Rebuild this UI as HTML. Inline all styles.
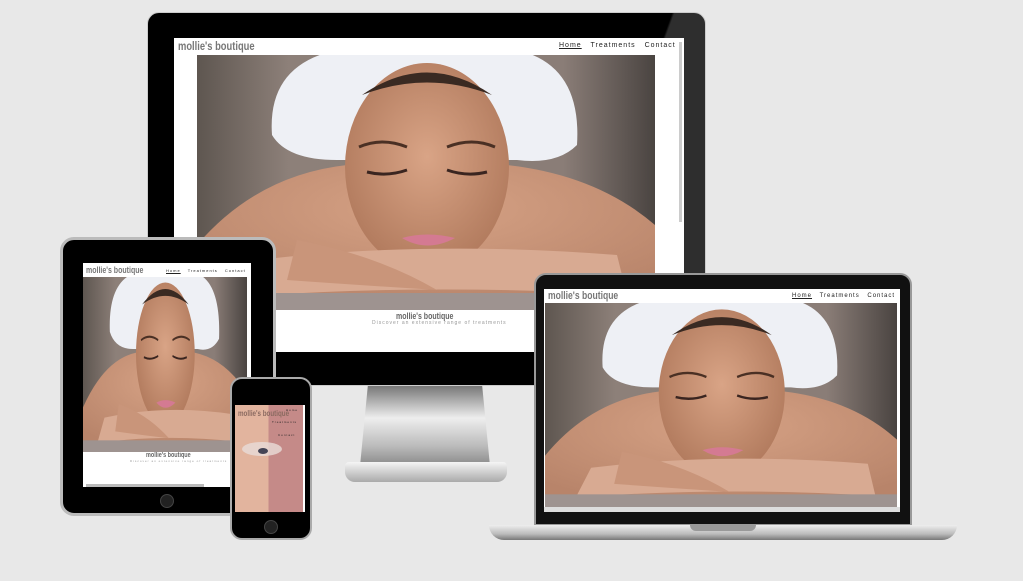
<!DOCTYPE html>
<html><head><meta charset="utf-8"><style>
*{margin:0;padding:0;box-sizing:border-box}
body{width:1023px;height:581px;background:#e8e8e8;position:relative;overflow:hidden;font-family:"Liberation Sans",sans-serif}
.a{position:absolute}
.logo{font-family:"Liberation Sans",sans-serif;font-weight:bold;color:#777;transform:scaleX(.78);transform-origin:left top;white-space:nowrap}
.nav{color:#222;letter-spacing:1px;white-space:nowrap}
</style></head><body>
<svg width="0" height="0" style="position:absolute"><defs>
<linearGradient id="bg" x1="0" x2="1"><stop offset="0" stop-color="#5e5650"/><stop offset=".2" stop-color="#8d8079"/><stop offset=".8" stop-color="#8a7d77"/><stop offset="1" stop-color="#4a4441"/></linearGradient>
<radialGradient id="sk" cx=".5" cy=".3" r=".7"><stop offset="0" stop-color="#d6a285"/><stop offset="1" stop-color="#b8846a"/></radialGradient>
<radialGradient id="fc" cx=".5" cy=".45" r=".55"><stop offset="0" stop-color="#d9a486"/><stop offset="1" stop-color="#b27b5e"/></radialGradient>
<symbol id="ph" viewBox="0 0 458 255" preserveAspectRatio="none">
<rect width="458" height="255" fill="url(#bg)"/>
<path d="M0 190 Q60 120 150 110 L310 110 Q400 120 458 170 L458 255 L0 255Z" fill="url(#sk)"/>
<path d="M75 80 Q70 10 140 -5 L320 -5 Q385 10 380 90 Q360 110 320 105 L140 105 Q90 105 75 80Z" fill="#eef0f5"/>
<ellipse cx="230" cy="112" rx="82" ry="104" fill="url(#fc)"/>
<path d="M165 40 Q230 -5 295 40 Q230 15 165 40Z" fill="#3a2a22"/>
<path d="M162 92 Q185 82 210 92 M250 92 Q275 82 298 92" stroke="#4a3024" stroke-width="3" fill="none"/>
<path d="M170 117 Q190 122 210 115 M250 115 Q270 122 290 117" stroke="#3a2520" stroke-width="3" fill="none"/>
<path d="M205 183 Q230 198 258 183 Q230 176 205 183Z" fill="#d47a92"/>
<path d="M60 205 Q230 185 420 200 L430 240 Q230 228 40 242Z" fill="#d8aa92"/>
<path d="M100 185 Q180 200 240 235 Q160 230 90 225Z" fill="#c9957a"/>
<rect x="0" y="238" width="458" height="17" fill="#9e9390"/>
</symbol>
</defs></svg>

<!-- Monitor -->
<div class="a" style="left:147px;top:12px;width:559px;height:374px;background:#000;border-radius:12px;border:1px solid #ccc"></div>
<div class="a" style="left:600px;top:13px;width:105px;height:372px;background:linear-gradient(110deg,transparent 30%,rgba(255,255,255,.18) 31%);border-radius:0 11px 11px 0"></div>
<div class="a" style="left:174px;top:38px;width:510px;height:314px;background:#fff"></div>
<div class="a logo" style="left:178px;top:39px;font-size:12px">mollie's boutique</div>
<div class="a nav" style="left:559px;top:42px;font-size:7px;word-spacing:6px"><u>Home</u> Treatments Contact</div>
<div class="a" style="left:679px;top:42px;width:3px;height:180px;background:#ccc"></div>
<svg class="a" style="left:197px;top:55px" width="458" height="255"><use href="#ph"/></svg>
<div class="a logo" style="left:396px;top:311px;font-size:9px;color:#666">mollie's boutique</div>
<div class="a" style="left:372px;top:320px;font-size:5px;color:#999;letter-spacing:1px">Discover an extensive range of treatments</div>
<div class="a" style="left:360px;top:386px;width:130px;height:80px;background:linear-gradient(#777,#eee 40%,#bbb 75%,#888);clip-path:polygon(6% 0,94% 0,100% 100%,0 100%)"></div>
<div class="a" style="left:345px;top:462px;width:162px;height:20px;background:linear-gradient(#f5f5f5,#aaa);border-radius:4px 4px 10px 10px"></div>

<!-- Laptop -->
<div class="a" style="left:534px;top:273px;width:378px;height:253px;background:#111;border-radius:12px 12px 0 0;border:2px solid #999"></div>
<div class="a" style="left:544px;top:289px;width:356px;height:223px;background:#fff"></div>
<div class="a logo" style="left:548px;top:290px;font-size:11px">mollie's boutique</div>
<div class="a nav" style="left:792px;top:293px;font-size:6px;word-spacing:5px"><u>Home</u> Treatments Contact</div>
<svg class="a" style="left:545px;top:303px" width="352" height="205"><use href="#ph"/></svg>
<div class="a" style="left:544px;top:507px;width:356px;height:5px;background:#ddd"></div>
<div class="a" style="left:489px;top:525px;width:468px;height:15px;background:linear-gradient(#eee,#bbb 60%,#777);border-radius:0 0 40px 40px"></div>
<div class="a" style="left:690px;top:525px;width:66px;height:6px;background:#999;border-radius:0 0 6px 6px"></div>

<!-- Tablet -->
<div class="a" style="left:60px;top:237px;width:216px;height:279px;background:#000;border-radius:14px;border:3px solid #bbb"></div>
<div class="a" style="left:83px;top:263px;width:168px;height:224px;background:#fff"></div>
<div class="a logo" style="left:86px;top:265px;font-size:9px">mollie's boutique</div>
<div class="a nav" style="left:166px;top:268px;font-size:4px;word-spacing:5px"><u>Home</u> Treatments Contact</div>
<svg class="a" style="left:83px;top:277px" width="164" height="175"><use href="#ph"/></svg>
<div class="a logo" style="left:146px;top:452px;font-size:7px;color:#666">mollie's boutique</div>
<div class="a" style="left:130px;top:459px;font-size:3px;color:#999;letter-spacing:1px">Discover an extensive range of treatments</div>
<div class="a" style="left:86px;top:484px;width:118px;height:3px;background:#bbb"></div>
<div class="a" style="left:160px;top:494px;width:14px;height:14px;border-radius:50%;background:#222;border:1px solid #444"></div>

<!-- Phone -->
<div class="a" style="left:230px;top:377px;width:82px;height:163px;background:#000;border-radius:12px;border:2px solid #aaa"></div>
<div class="a" style="left:235px;top:405px;width:70px;height:107px;background:linear-gradient(90deg,#e2b49e 0 48%,#c58a88 48% 97%,#fff 97%)"></div>
<div class="a" style="left:242px;top:442px;width:40px;height:14px;border-radius:50%;background:#e8dcd8;opacity:.8"></div>
<div class="a" style="left:258px;top:448px;width:10px;height:6px;border-radius:50%;background:#445"></div>
<div class="a logo" style="left:238px;top:409px;font-size:8px;color:#8a6a60">mollie's boutique</div>
<div class="a nav" style="left:286px;top:408px;font-size:3px">Home</div>
<div class="a nav" style="left:272px;top:420px;font-size:3px">Treatments</div>
<div class="a nav" style="left:278px;top:433px;font-size:3px">Contact</div>
<div class="a" style="left:264px;top:520px;width:14px;height:14px;border-radius:50%;background:#222;border:1px solid #444"></div>
</body></html>
